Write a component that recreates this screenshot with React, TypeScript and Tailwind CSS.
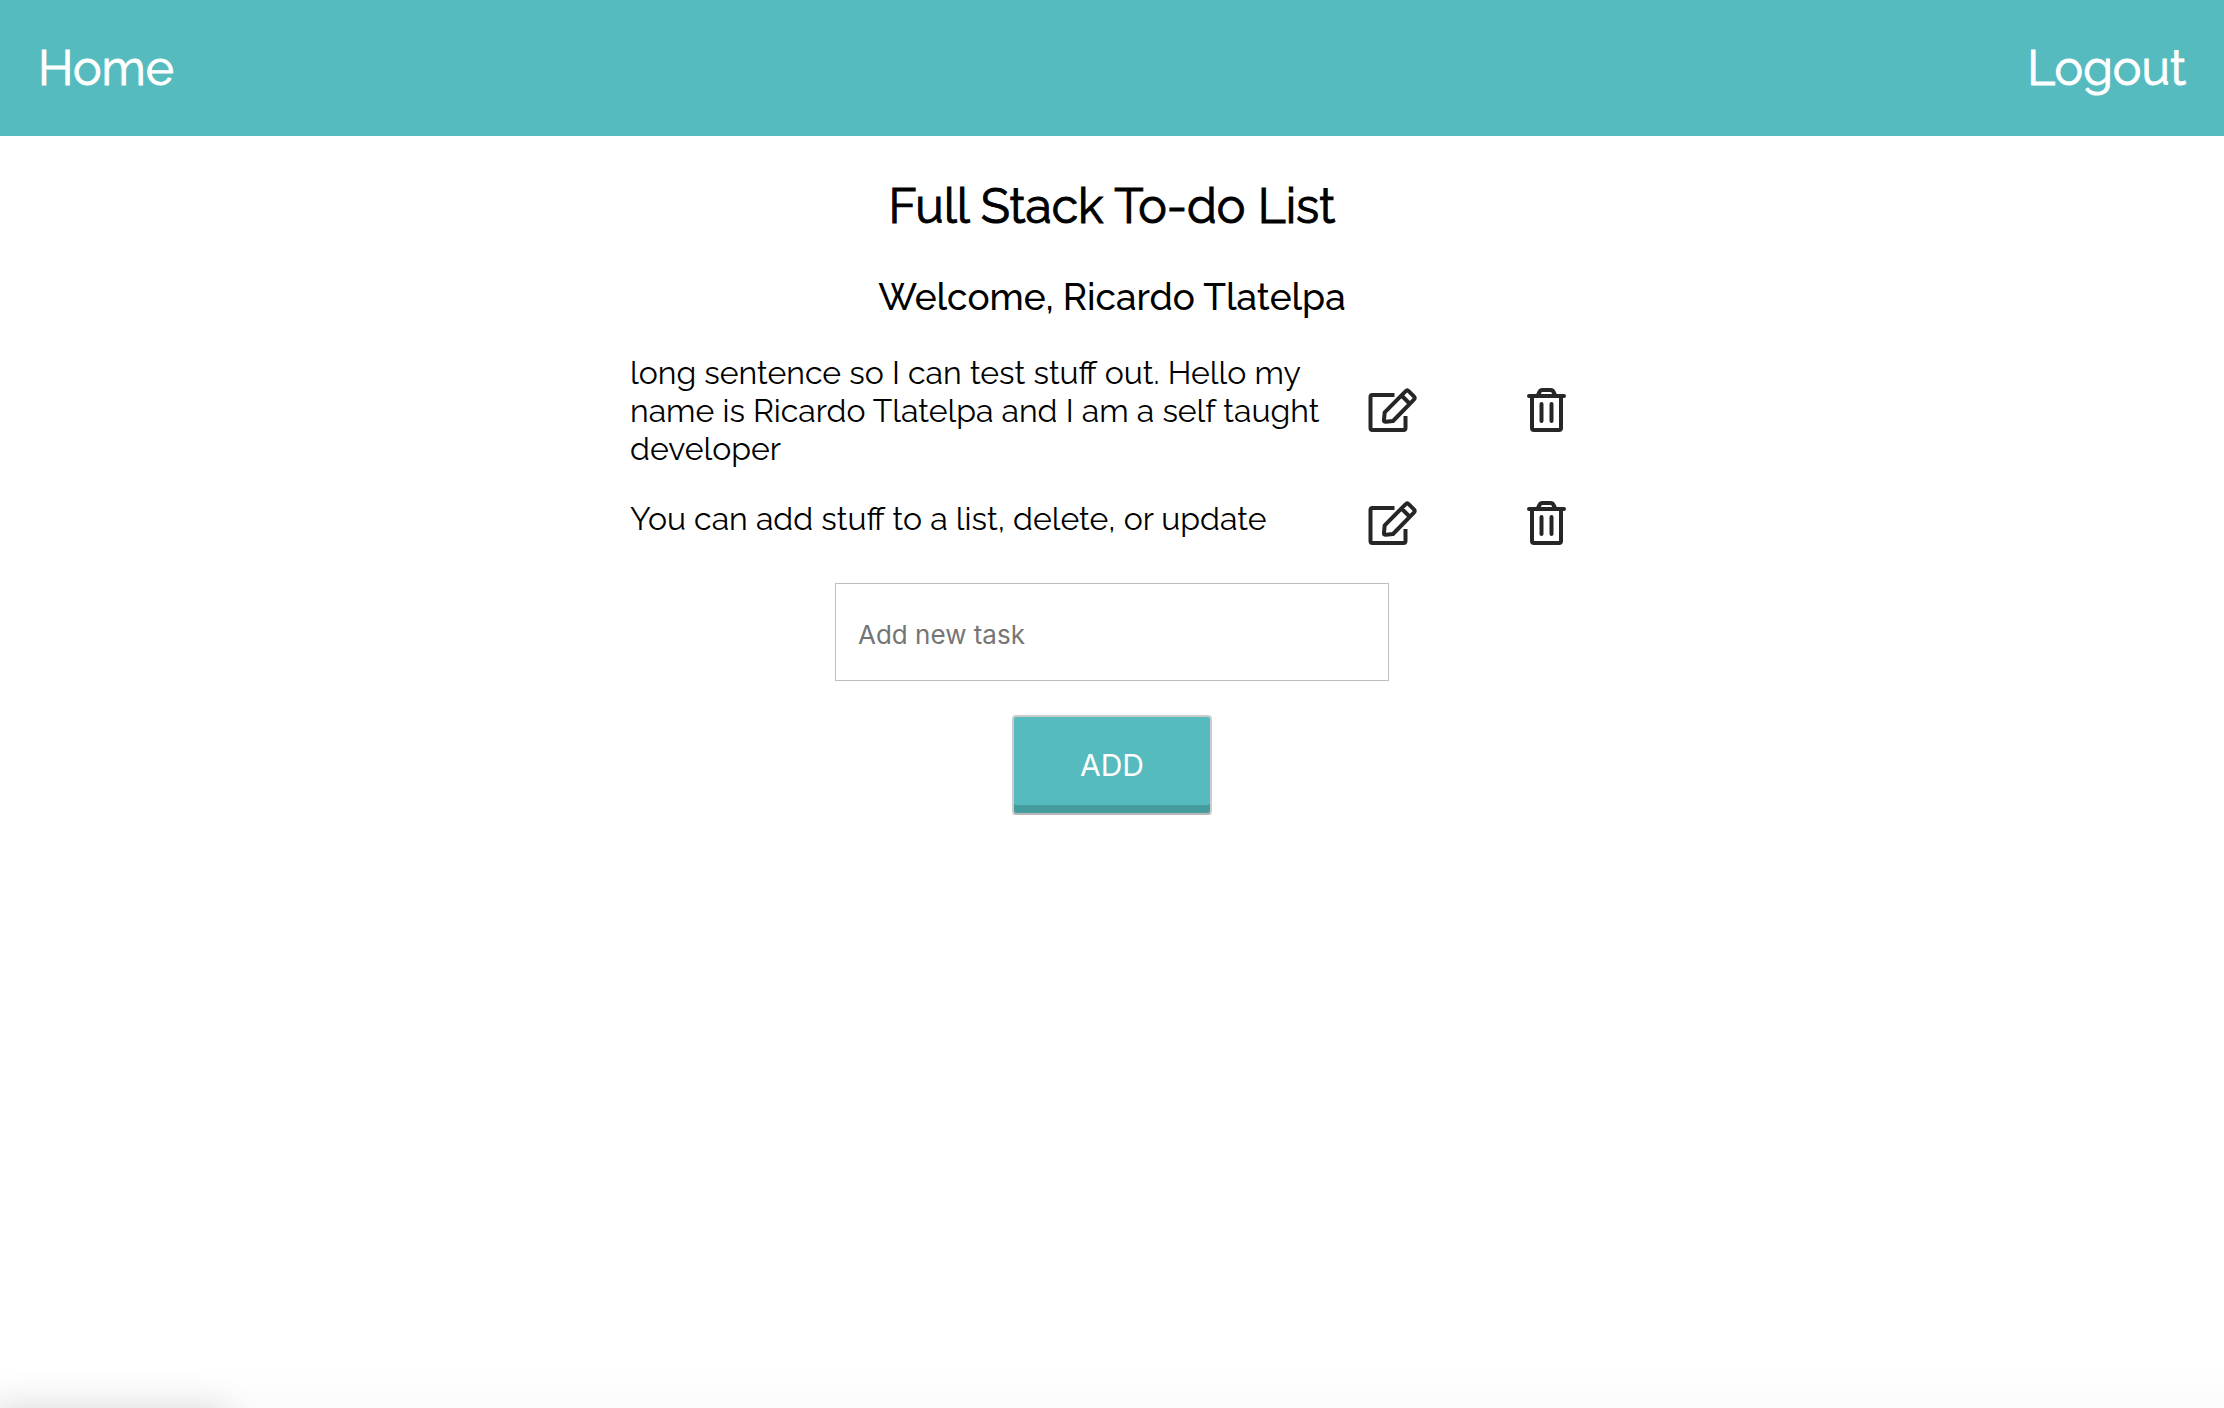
import React from "react";

const tasks = [
  "long sentence so I can test stuff out. Hello my name is Ricardo Tlatelpa and I am a self taught developer",
  "You can add stuff to a list, delete, or update",
];

function EditIcon() {
  return (
    <svg viewBox="0 0 52 48" className="h-12 w-[52px]" fill="none" stroke="#262626" strokeWidth="4" strokeLinecap="butt" strokeLinejoin="round" aria-hidden="true">
      <path d="M28.500 8H6.500a2 2 0 0 0-2 2v31a2 2 0 0 0 2 2h31a2 2 0 0 0 2-2V29" />
      <path d="M39.500 4.300q1.700-1.700 3.400 0l5 5q1.700 1.700 0 3.400L27 34l-7 .8q-2.500.2-2-2l.7-7.500zM35.500 8.500l8.500 8.500" />
    </svg>
  );
}

function TrashIcon() {
  return (
    <svg viewBox="0 0 40 48" className="h-12 w-10" fill="none" stroke="#262626" strokeWidth="4" strokeLinecap="round" strokeLinejoin="round" aria-hidden="true">
      <path d="M3 9h35M6 10v31a2 2 0 0 0 2 2h25a2 2 0 0 0 2-2V10M15.500 17v17M25.500 17v17M12 8l1.500-3q.8-2 3-2h8q2.200 0 3 2L29 8" />
    </svg>
  );
}

export default function App() {
  return (
    <div className="flex min-h-screen flex-col bg-white font-['Raleway',Lato,sans-serif] text-black">
      <nav className="flex h-[136px] items-center justify-between bg-[#56bbbe] px-[38px] text-[48px] leading-[60px] text-white [-webkit-text-stroke:1px_white]">
        <a href="#home">Home</a>
        <a href="#logout">Logout</a>
      </nav>
      <main className="flex flex-1 flex-col items-center">
        <h1 className="mt-10 text-[48px] leading-[60px] [-webkit-text-stroke:1px_black]">Full Stack To-do List</h1>
        <h2 className="mt-9 text-[37px] leading-[50px] font-medium">Welcome, Ricardo Tlatelpa</h2>
        <ul className="mt-8 flex w-[964px] flex-col gap-8">
          {tasks.map((task) => (
            <li key={task} className="flex items-center text-[32px] leading-[38px]">
              <span className="w-[700px] self-start">{task}</span>
              <button type="button" aria-label="Edit task" className="ml-[36px]"><EditIcon /></button>
              <button type="button" aria-label="Delete task" className="ml-[108px]"><TrashIcon /></button>
            </li>
          ))}
        </ul>
        <form className="mt-[35px] flex flex-col items-center gap-[34px]" onSubmit={(e) => e.preventDefault()}>
          <input aria-label="Add new task" placeholder="Add new task" className="h-[98px] w-[554px] border border-[#bdbdbd] px-[22px] pt-1 font-[Inter,sans-serif] text-[26px] placeholder:text-[#757575]" />
          <button type="submit" className="h-[100px] w-[200px] rounded border-2 border-[#cccccc] border-b-[#b8b8b8] bg-[#56bbbe] font-[Inter,sans-serif] text-[30px] text-white shadow-[inset_0_-8px_0_#479c9e]">ADD</button>
        </form>
      </main>
      <footer className="h-10 overflow-hidden bg-linear-to-b from-white to-[#fbfbfb]" aria-hidden="true">
        <div className="mt-[50px] h-10 w-[220px] shadow-[0_0_40px_6px_rgba(0,0,0,0.16)]" />
      </footer>
    </div>
  );
}
